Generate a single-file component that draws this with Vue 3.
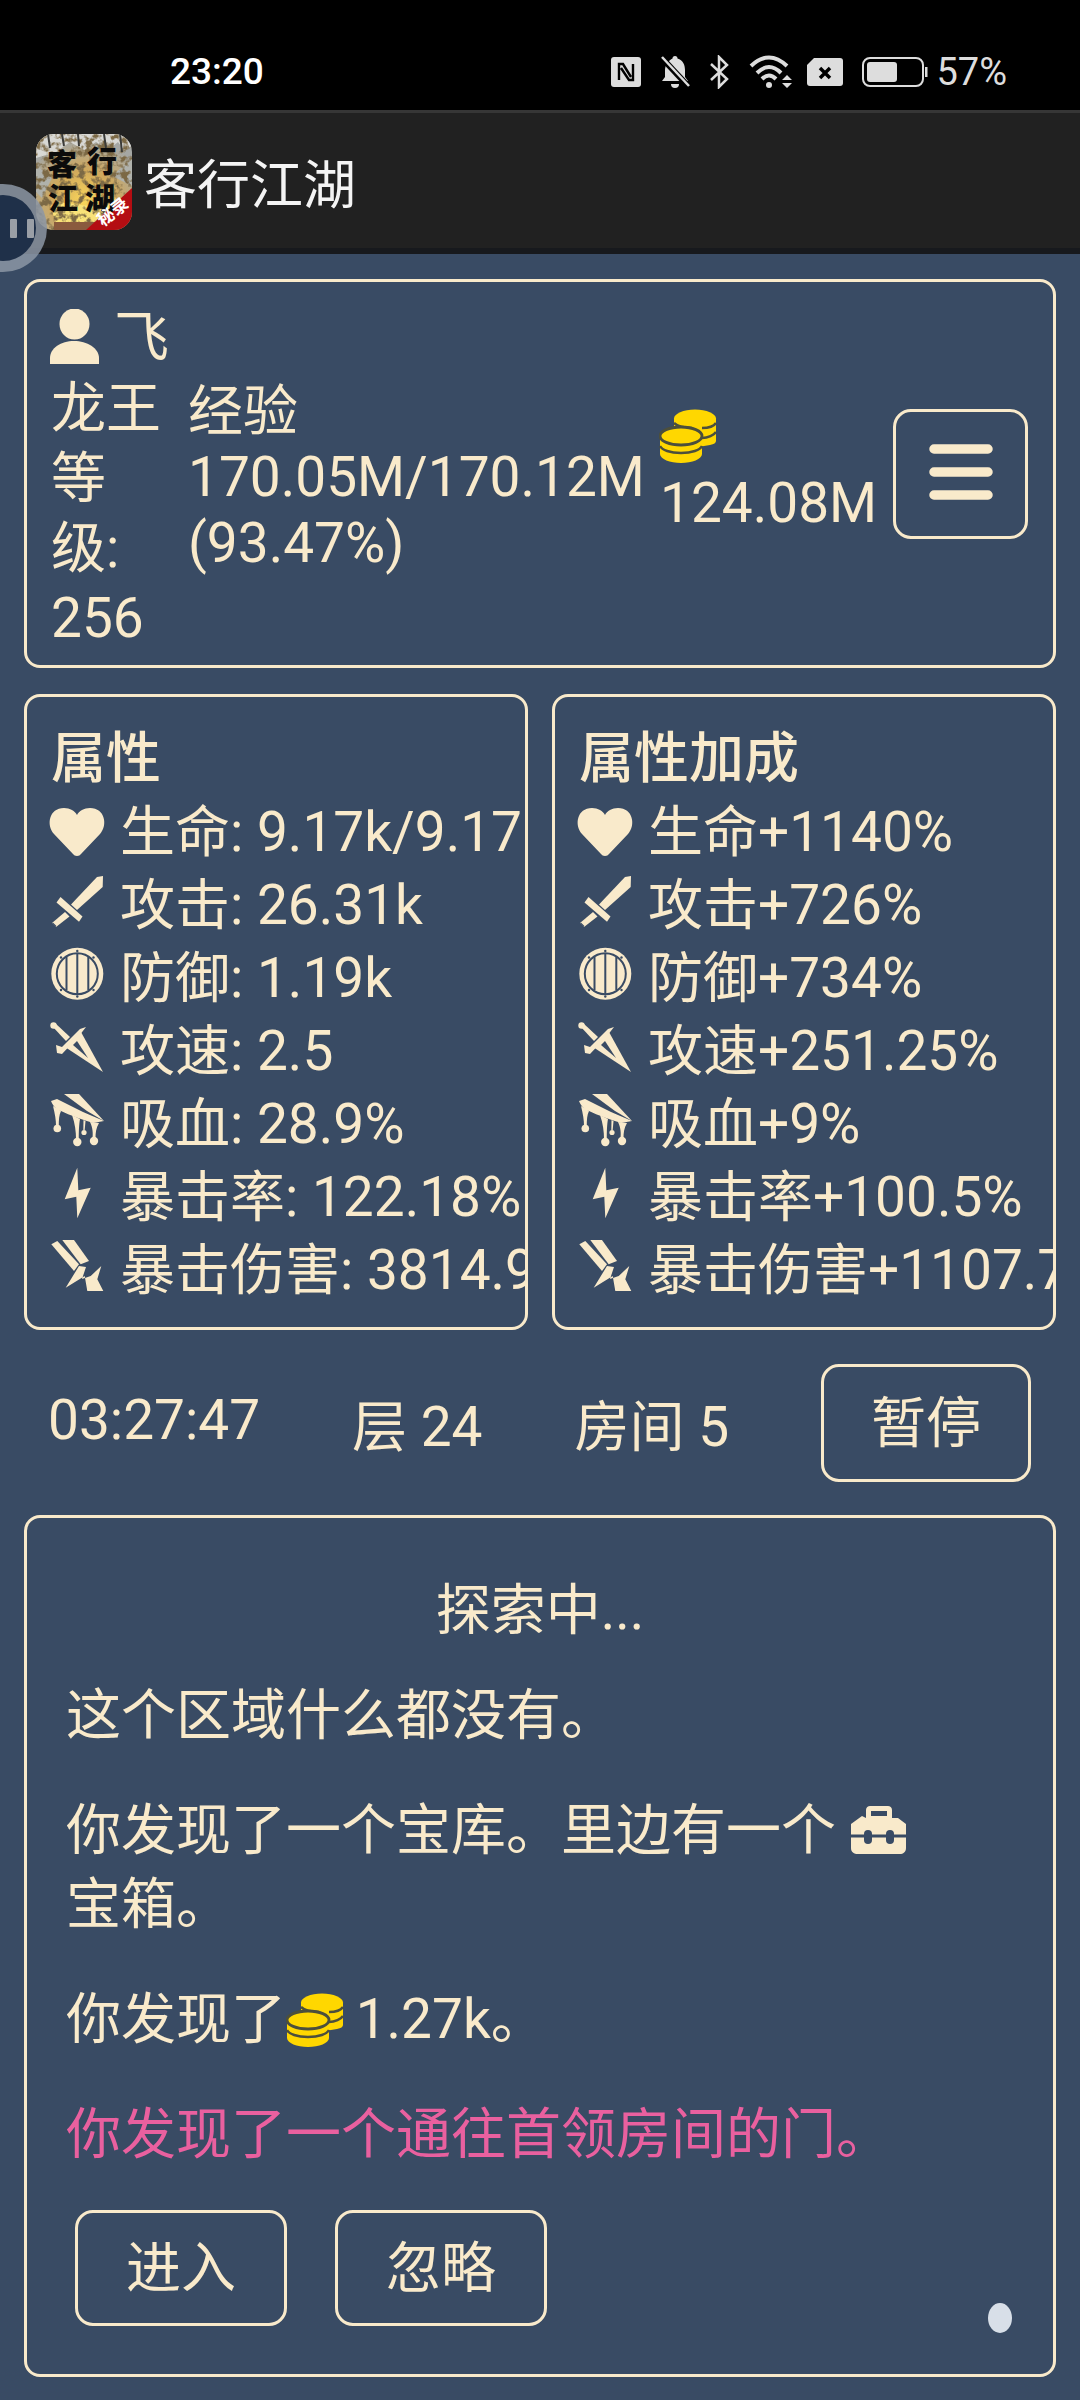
<script setup>
const icons = {
  heart: '<path d="M28 52 C26 52 25 51 24 50 L5 30 C-3 21 0 4 15 4 C21 4 26 7 28 11 C30 7 35 4 41 4 C56 4 59 21 51 30 L32 50 C31 51 30 52 28 52Z"/>',
  sword: '<path d="M48 0 L54 -1 L53.700 10 L28 33 L22 27.500Z"/><path d="M11.500 20 L33.500 39.500 L30 44.700 L7.500 25.500Z"/><path d="M16 35 L20.500 39.500 L7 50 L3 46Z"/><path d="M3.500 46 L7 49.500" stroke="#394b64" stroke-width="1.200"/>',
  shield: '<circle cx="28.300" cy="23.700" r="26"/><circle cx="28.300" cy="23.700" r="20.500" fill="none" stroke="#394b64" stroke-width="2"/><path d="M17.500 7 V40 M28.300 3 V44 M39.300 7 V40" stroke="#394b64" stroke-width="2"/><g fill="#394b64"><circle cx="28.300" cy="0.900" r="1.200"/><circle cx="28.300" cy="46.500" r="1.200"/><circle cx="12" cy="7.500" r="1.200"/><circle cx="44.500" cy="7.500" r="1.200"/><circle cx="12" cy="40" r="1.200"/><circle cx="44.500" cy="40" r="1.200"/></g>',
  dagger: '<circle cx="4.500" cy="2.500" r="3.200"/><path d="M3 3 L6 0 L21 14 L17 18Z"/><path d="M7 22 L13 24 L31 6 L37 4 L30 13 L13 31 L8 30Z"/><path d="M25 15 L32 9 L54 49 L16 24Z"/><path d="M24 22 L28 18 L39 35Z" fill="#394b64"/>',
  fang: '<path d="M15 -2 L30 -2 L55 25 L38 15Z"/><path d="M2 5 L8 3 L34 16 L55 25 L44 27 C35 24 20 19 12 15 L8 14 C7 12 4 10 2 5Z"/><path d="M4 10 C6 18 7 24 7 30 H9.800 C9.800 24 10 19 12 15Z"/><circle cx="8.300" cy="32.500" r="3.800"/><path d="M23 19 C26 27 27 36 27 43 H29.800 C29.800 36 30 28 31 23Z"/><circle cx="28.300" cy="46" r="4.200"/><path d="M34.500 24 L34.300 34 H35.700 L36.500 25Z"/><circle cx="35" cy="36.500" r="2.600"/><path d="M41 26 C44 32 44 38 43.500 42 H46.500 C46.500 37 47 32 50 27Z"/><circle cx="45" cy="45" r="4.200"/>',
  bolt: '<path d="M28.300 -1.300 L29.300 21.300 L41.700 18.700 L28.300 49.300 L27.300 27.700 L15.700 30.300Z"/>',
  crit: '<path d="M2.300 2.300 L8.300 -1 L30 22.300 L25 29Z"/><path d="M13.300 -2 L25 -2 L40 19 L31.700 22.300Z"/><path d="M30 24 L16.700 45.700 L35.700 34 L38.300 49 L54.300 49 L48.300 37.300 L52.300 24 L41.700 34 L33 37 L37 25Z"/>',
}
const left = [
  ['heart', '生命: 9.17k/9.17k'],
  ['sword', '攻击: 26.31k'],
  ['shield', '防御: 1.19k'],
  ['dagger', '攻速: 2.5'],
  ['fang', '吸血: 28.9%'],
  ['bolt', '暴击率: 122.18%'],
  ['crit', '暴击伤害: 3814.95%'],
]
const right = [
  ['heart', '生命+1140%'],
  ['sword', '攻击+726%'],
  ['shield', '防御+734%'],
  ['dagger', '攻速+251.25%'],
  ['fang', '吸血+9%'],
  ['bolt', '暴击率+100.5%'],
  ['crit', '暴击伤害+1107.75%'],
]
const panels = [
  { title: '属性', rows: left },
  { title: '属性加成', rows: right },
]
const coins = '<path d="M24 19.500 V44 C30 49 42 50 48 48 L60 46 C64 45 66 44 66 42 V19.500Z" fill="#ffd700"/><ellipse cx="45" cy="19.500" rx="21" ry="9" fill="#ffd700"/><path d="M52 29 C58 29 64 27 66 24 M52 39 C58 39 64 36 66 33" fill="none" stroke="#4c4f3c" stroke-width="2.500"/><path d="M24 24 C28 28 36 29 42 29" fill="none" stroke="#4c4f3c" stroke-width="2.500"/><path d="M10 37 V55 C10 60 20 64 31 64 C42 64 52 60 52 55 V37Z" fill="#ffd700"/><path d="M10 47 C12 51 20 54 31 54 C42 54 50 51 52 47" fill="none" stroke="#4c4f3c" stroke-width="2.500"/><ellipse cx="31" cy="37" rx="21" ry="9" fill="#ffd700" stroke="#4c4f3c" stroke-width="2.800"/>'
</script>

<template>
  <div class="page">
    <div class="status">
      <span class="clock">23:20</span>
      <div class="sys">
        <svg width="30" height="30" viewBox="0 0 30 30"><rect width="30" height="30" rx="3" fill="#ddd"/><path d="M8 23 V7 H12 L20 20 M22 7 V23 H18 L10 11" fill="none" stroke="#000" stroke-width="2.400"/></svg>
        <svg width="30" height="34" viewBox="0 0 30 34"><path d="M15 1 a2.500 2.500 0 0 1 2.500 2.500 C23 5 25 10 25 15 V22 L28 26 H2 L5 22 V15 C5 10 9 5 12.500 3.500 A2.500 2.500 0 0 1 15 1Z" fill="#ddd"/><path d="M11 29 h8 a4 4 0 0 1 -8 0" fill="#ddd"/><path d="M1 2 L29 32" stroke="#000" stroke-width="6"/><path d="M2 2 L29 31" stroke="#ddd" stroke-width="2.500"/></svg>
        <svg width="21" height="34" viewBox="0 0 21 34"><path d="M2 9 L18 24 L10 32 V2 L18 10 L2 25" fill="none" stroke="#ddd" stroke-width="2.500"/></svg>
        <svg class="wifi" width="44" height="34" viewBox="0 0 44 34"><path d="M2 11 Q20 -6 38 11 M8 18 Q20 6 32 18 M13 24 Q20 17 27 24" fill="none" stroke="#ddd" stroke-width="4"/><circle cx="20" cy="30" r="3" fill="#ddd"/><path d="M38 20 L33 25 H43Z M33 28 H43 L38 33Z" fill="#ddd"/></svg>
        <svg width="36" height="28" viewBox="0 0 36 28"><path d="M7 0 H33 a3 3 0 0 1 3 3 V25 a3 3 0 0 1 -3 3 H3 a3 3 0 0 1 -3 -3 V7Z" fill="#ddd"/><path d="M13 10 L23 20 M23 10 L13 20" stroke="#000" stroke-width="3.500"/></svg>
        <svg class="batt" width="66" height="30" viewBox="0 0 66 30"><rect x="1" y="1" width="60" height="28" rx="7" fill="none" stroke="#ddd" stroke-width="2"/><rect x="5" y="5" width="30" height="20" rx="3" fill="#ddd"/><rect x="63" y="10" width="2.500" height="10" fill="#ddd"/></svg>
        <span class="pct">57%</span>
      </div>
    </div>

    <header class="bar">
      <svg class="logo" width="96" height="96" viewBox="36 134 96 96">
        <defs>
          <radialGradient id="lg" cx="50%" cy="70%" r="65%"><stop offset="0" stop-color="#fbd65a"/><stop offset=".5" stop-color="#d0a95c"/><stop offset="1" stop-color="#a5a7a4"/></radialGradient>
          <clipPath id="lc"><rect x="36" y="134" width="96" height="96" rx="18"/></clipPath>
          <filter id="ln" x="0" y="0" width="100%" height="100%"><feTurbulence type="fractalNoise" baseFrequency=".14" numOctaves="3" seed="7"/><feColorMatrix type="matrix" values="0 0 0 0 .2  0 0 0 0 .14  0 0 0 0 .06  5 0 0 0 -2.300"/></filter>
        </defs>
        <g clip-path="url(#lc)">
          <rect x="36" y="134" width="96" height="96" fill="url(#lg)"/>
          <path d="M36 134 H132 V146 L124 150 L118 142 L108 150 L96 142 L84 150 L70 142 L56 152 L36 158Z" fill="#d8d8d4"/>
          <path d="M36 165 L52 178 L42 198 L36 192Z M112 176 L132 158 V186Z" fill="#b0b2ac"/>
          <path d="M50 206 C70 196 92 216 116 198 L110 222 L56 222Z" fill="#f9e278"/>
          <rect x="36" y="134" width="96" height="96" filter="url(#ln)"/>
          <path d="M48 134 L50 148 M62 134 L64 146 M78 134 L79 146 M104 134 L106 148 M120 134 L122 152" stroke="#3b3b38" stroke-width="2"/>
          <path d="M54 222 H96 V230 H54Z" fill="#8a5a3e"/>
          <path d="M133 187 V230 H86Z" fill="#b40d12"/>
          <text class="logo-t" x="47" y="175">客</text><text class="logo-t" x="87" y="172">行</text>
          <text class="logo-t" x="48" y="209">江</text><text class="logo-t" x="85" y="209">湖</text>
          <text class="logo-s" x="103" y="227" transform="rotate(-38 103 227)">秘录</text>
        </g>
      </svg>
      <span class="title">客行江湖</span>
    </header>

    <div class="float"><span class="float-in"><i></i><i></i></span></div>

    <main class="body">
      <section class="card top">
        <div class="who">
          <div class="name">
            <svg width="50" height="56" viewBox="0 0 50 56"><ellipse cx="25.500" cy="15" rx="15" ry="15.500" fill="currentColor"/><path d="M1 55 V49 C1 39 12 32 25 32 C38 32 50 39 50 49 V55Z" fill="currentColor"/></svg>
            <span>飞</span>
          </div>
          <div class="level">龙王 等级: 256</div>
        </div>
        <div class="exp">经验 170.05M/170.12M (93.47%)</div>
        <div class="gold">
          <svg class="coins" width="60" height="60" viewBox="9 9 60 60" v-html="coins"></svg>
          <div>124.08M</div>
        </div>
        <button class="btn menu" aria-label="菜单">
          <svg width="64" height="56" viewBox="0 0 64 56"><path d="M5 5 H59 M5 28 H59 M5 51 H59" stroke="currentColor" stroke-width="9.500" stroke-linecap="round"/></svg>
        </button>
      </section>

      <div class="stats">
        <section v-for="p in panels" :key="p.title" class="card panel">
          <h3>{{ p.title }}</h3>
          <div v-for="r in p.rows" :key="r[1]" class="row">
            <svg class="ico" width="56" height="56" viewBox="0 0 56 56" fill="currentColor" v-html="icons[r[0]]"></svg>
            <span>{{ r[1] }}</span>
          </div>
        </section>
      </div>

      <div class="run">
        <span class="time">03:27:47</span>
        <span class="lvl">层 24</span>
        <span class="lvl">房间 5</span>
        <button class="btn pause">暂停</button>
      </div>

      <section class="card log">
        <div class="head">探索中...</div>
        <p>这个区域什么都没有。</p>
        <p>你发现了一个宝库。里边有一个
          <svg class="box" width="58" height="50" viewBox="10 5 58 50"><path fill-rule="evenodd" d="M26 18 V10 C26 7.500 28 6 30 6 H48 C50 6 52 7.500 52 10 V18 H58 L66 24 V48 C66 52 63 54 60 54 H18 C14 54 11 52 11 48 V24 L22 16 Z M31 11 V16 H47 V11Z" fill="currentColor"/><path d="M11 36 H66" stroke="#394b64" stroke-width="3"/><rect x="24" y="30" width="8" height="14" rx="4" fill="#394b64"/><rect x="46" y="30" width="8" height="14" rx="4" fill="#394b64"/></svg>
          <span class="keep">宝箱。</span></p>
        <p>你发现了<svg class="coins inl" width="60" height="60" viewBox="9 9 60 60" v-html="coins"></svg> 1.27k。</p>
        <p class="pink">你发现了一个通往首领房间的门。</p>
        <div class="acts">
          <button class="btn act">进入</button>
          <button class="btn act">忽略</button>
        </div>
        <span class="dot"></span>
      </section>
    </main>
  </div>
</template>

<style>
html, body { margin: 0; background: #394b64; }
</style>

<style scoped>
.page {
  position: relative;
  width: 1080px;
  height: 2400px;
  overflow: hidden;
  background: #394b64;
  color: #f9eacb;
  font-family: Roboto, "Noto Sans CJK SC", sans-serif;
  font-size: 55px;
  line-height: 74px;
}
.status {
  box-sizing: border-box;
  height: 110px;
  padding: 34px 73px 0 170px;
  background: #000;
  display: flex;
  align-items: center;
  justify-content: space-between;
}
.clock { font-size: 37px; line-height: 44px; font-weight: 500; color: #fff; }
.sys { display: flex; align-items: center; gap: 19px; color: #ddd; }
.wifi { margin-right: -5px; }
.batt { margin-right: -11px; }
.pct { font-size: 38px; line-height: 44px; }
.bar {
  box-sizing: border-box;
  height: 144px;
  padding: 21px 0 0 36px;
  background: #212121;
  border-top: 3px solid #363636;
  border-bottom: 6px solid #17191d;
  display: flex;
  align-items: flex-start;
  gap: 12px;
}
.logo { flex: none; }
.logo-t { font-size: 30px; font-weight: 900; fill: #0b0b0b; }
.logo-s { font-size: 17px; font-weight: 700; fill: #fff; }
.title { font-size: 53px; line-height: 96px; color: #f4f4f4; margin-top: 4px; }
.float {
  position: absolute;
  left: -41px;
  top: 184px;
  width: 88px;
  height: 88px;
  border-radius: 50%;
  background: rgba(140, 150, 165, 0.85);
  display: flex;
  align-items: center;
  justify-content: center;
}
.float-in {
  width: 66px;
  height: 66px;
  border-radius: 50%;
  background: #1f3049;
  display: flex;
  align-items: center;
  justify-content: flex-end;
  gap: 10px;
  padding-right: 2px;
  box-sizing: border-box;
}
.float-in i { width: 7px; height: 19px; background: #9a9fa6; border-radius: 1px; }
.body { padding: 25px 24px 0; }
.card {
  box-sizing: border-box;
  border: 3px solid #f9eacb;
  border-radius: 16px;
  overflow: hidden;
}
.top {
  height: 389px;
  padding: 18px 23px 12px 24px;
  display: flex;
  align-items: center;
}
.who { width: 120px; flex: none; margin-right: 17px; }
.name {
  display: flex;
  align-items: center;
  gap: 15px;
  height: 72px;
  white-space: nowrap;
  margin-left: -2px;
}
.level { line-height: 70px; }
.exp { width: 466px; flex: none; margin-right: 6px; line-height: 66px; }
.gold { width: 225px; flex: none; margin-right: 8px; margin-bottom: 8px; line-height: 70px; }
.coins { display: block; margin-left: -1px; }
.btn {
  box-sizing: border-box;
  background: transparent;
  border: 3px solid #f9eacb;
  border-radius: 18px;
  color: inherit;
  font: inherit;
  padding: 0;
  display: flex;
  align-items: center;
  justify-content: center;
}
.menu { width: 135px; height: 130px; flex: none; margin-bottom: 6px; padding-bottom: 3px; }
.stats {
  display: grid;
  grid-template-columns: 1fr 1fr;
  gap: 24px;
  margin-top: 26px;
}
.panel { height: 636px; padding: 24px; }
h3 { margin: 0; font-size: 55px; line-height: 74px; font-weight: 500; white-space: nowrap; }
.row {
  display: flex;
  align-items: center;
  height: 73px;
  white-space: nowrap;
}
.ico { flex: none; margin-left: -2px; margin-right: 15px; overflow: visible; }
.run {
  display: flex;
  align-items: center;
  justify-content: space-between;
  margin-top: 34px;
  padding: 0 1px 0 24px;
  height: 118px;
}
.time { padding-bottom: 6px; }
.lvl { padding-top: 8px; }
.pause { width: 210px; height: 118px; margin-right: 24px; }
.log {
  position: relative;
  margin-top: 33px;
  height: 862px;
  padding: 55px 39px 48px;
}
.head { text-align: center; margin-bottom: 31px; }
p { margin: 0 0 41px; }
.box { vertical-align: -6px; margin-left: 0; }
.keep { white-space: nowrap; }
.inl { display: inline-block; vertical-align: -14px; margin: 0 -4px 0 0; }
.pink { color: #e9609f; }
.acts { display: flex; gap: 48px; margin: -2px 0 0 9px; }
.act { width: 212px; height: 116px; }
.dot {
  position: absolute;
  right: 41px;
  top: 785px;
  width: 24px;
  height: 30px;
  border-radius: 50%;
  background: #d8dfe8;
}
</style>
